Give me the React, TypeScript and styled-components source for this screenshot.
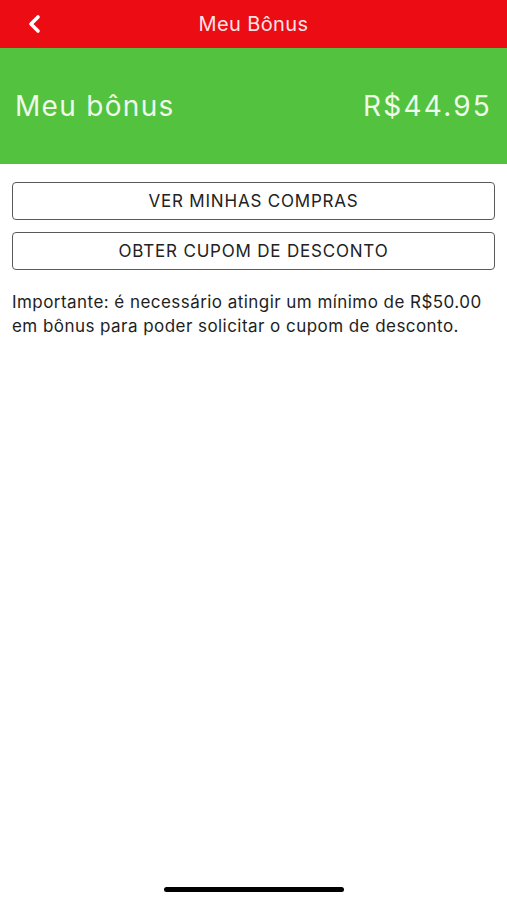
import React from "react";
import styled, { createGlobalStyle } from "styled-components";

const Global = createGlobalStyle`
  html, body { margin: 0; padding: 0; background: #ffffff; }
  body { font-family: Inter, "Liberation Sans", Arial, sans-serif; }
  * { box-sizing: border-box; }
`;

const Screen = styled.div`
  width: 507px;
  height: 900px;
  display: flex;
  flex-direction: column;
  background: #ffffff;
  position: relative;
`;

const NavBar = styled.header`
  height: 48px;
  background: #ec0c14;
  display: grid;
  grid-template-columns: 60px 1fr 60px;
  align-items: center;
`;

const BackButton = styled.button`
  border: none;
  background: none;
  padding: 0 0 0 26px;
  height: 48px;
  display: flex;
  align-items: center;
  cursor: pointer;
`;

const NavTitle = styled.h1`
  margin: 0;
  text-align: center;
  color: #fbe3e3;
  font-size: 20px;
  font-weight: 400;
  letter-spacing: 0.4px;
`;

const BonusBanner = styled.section`
  height: 116px;
  background: #52c23f;
  display: flex;
  align-items: center;
  justify-content: space-between;
  padding: 0 15px 0 15px;
  color: #eef9ea;
  font-size: 28px;
`;

const BannerText = styled.span<{ $spacing: number }>`
  letter-spacing: ${(p) => p.$spacing}px;
`;

const Content = styled.div`
  padding: 18px 12px 0 12px;
  display: flex;
  flex-direction: column;
  gap: 12px;
`;

const OutlineButton = styled.button`
  height: 38px;
  width: 100%;
  background: #ffffff;
  border: 1.5px solid #5a5a5a;
  border-radius: 4px;
  font-family: Inter, "Liberation Sans", Arial, sans-serif;
  font-size: 17px;
  color: #222222;
  letter-spacing: 0.8px;
  cursor: pointer;
`;

const Note = styled.p`
  margin: 8px 0 0 0;
  font-size: 17px;
  line-height: 24px;
  color: #1e1e1e;
  letter-spacing: 0.45px;
  white-space: nowrap;
`;

const HomeIndicator = styled.div`
  position: absolute;
  left: 164px;
  bottom: 8px;
  width: 180px;
  height: 5px;
  border-radius: 3px;
  background: #000000;
`;

export default function App() {
  return (
    <Screen>
      <Global />
      <NavBar>
        <BackButton aria-label="Voltar">
          <svg width="16" height="20" viewBox="0 0 16 20">
            <path d="M12 3 L5 10 L12 17" fill="none" stroke="#ffffff" strokeWidth="3.6" strokeLinecap="round" strokeLinejoin="round" />
          </svg>
        </BackButton>
        <NavTitle>Meu Bônus</NavTitle>
        <div />
      </NavBar>
      <BonusBanner>
        <BannerText $spacing={1.3}>Meu bônus</BannerText>
        <BannerText $spacing={2.2}>R$44.95</BannerText>
      </BonusBanner>
      <Content>
        <OutlineButton>VER MINHAS COMPRAS</OutlineButton>
        <OutlineButton>OBTER CUPOM DE DESCONTO</OutlineButton>
        <Note>
          Importante: é necessário atingir um mínimo de R$50.00
          <br />
          em bônus para poder solicitar o cupom de desconto.
        </Note>
      </Content>
      <HomeIndicator />
    </Screen>
  );
}
